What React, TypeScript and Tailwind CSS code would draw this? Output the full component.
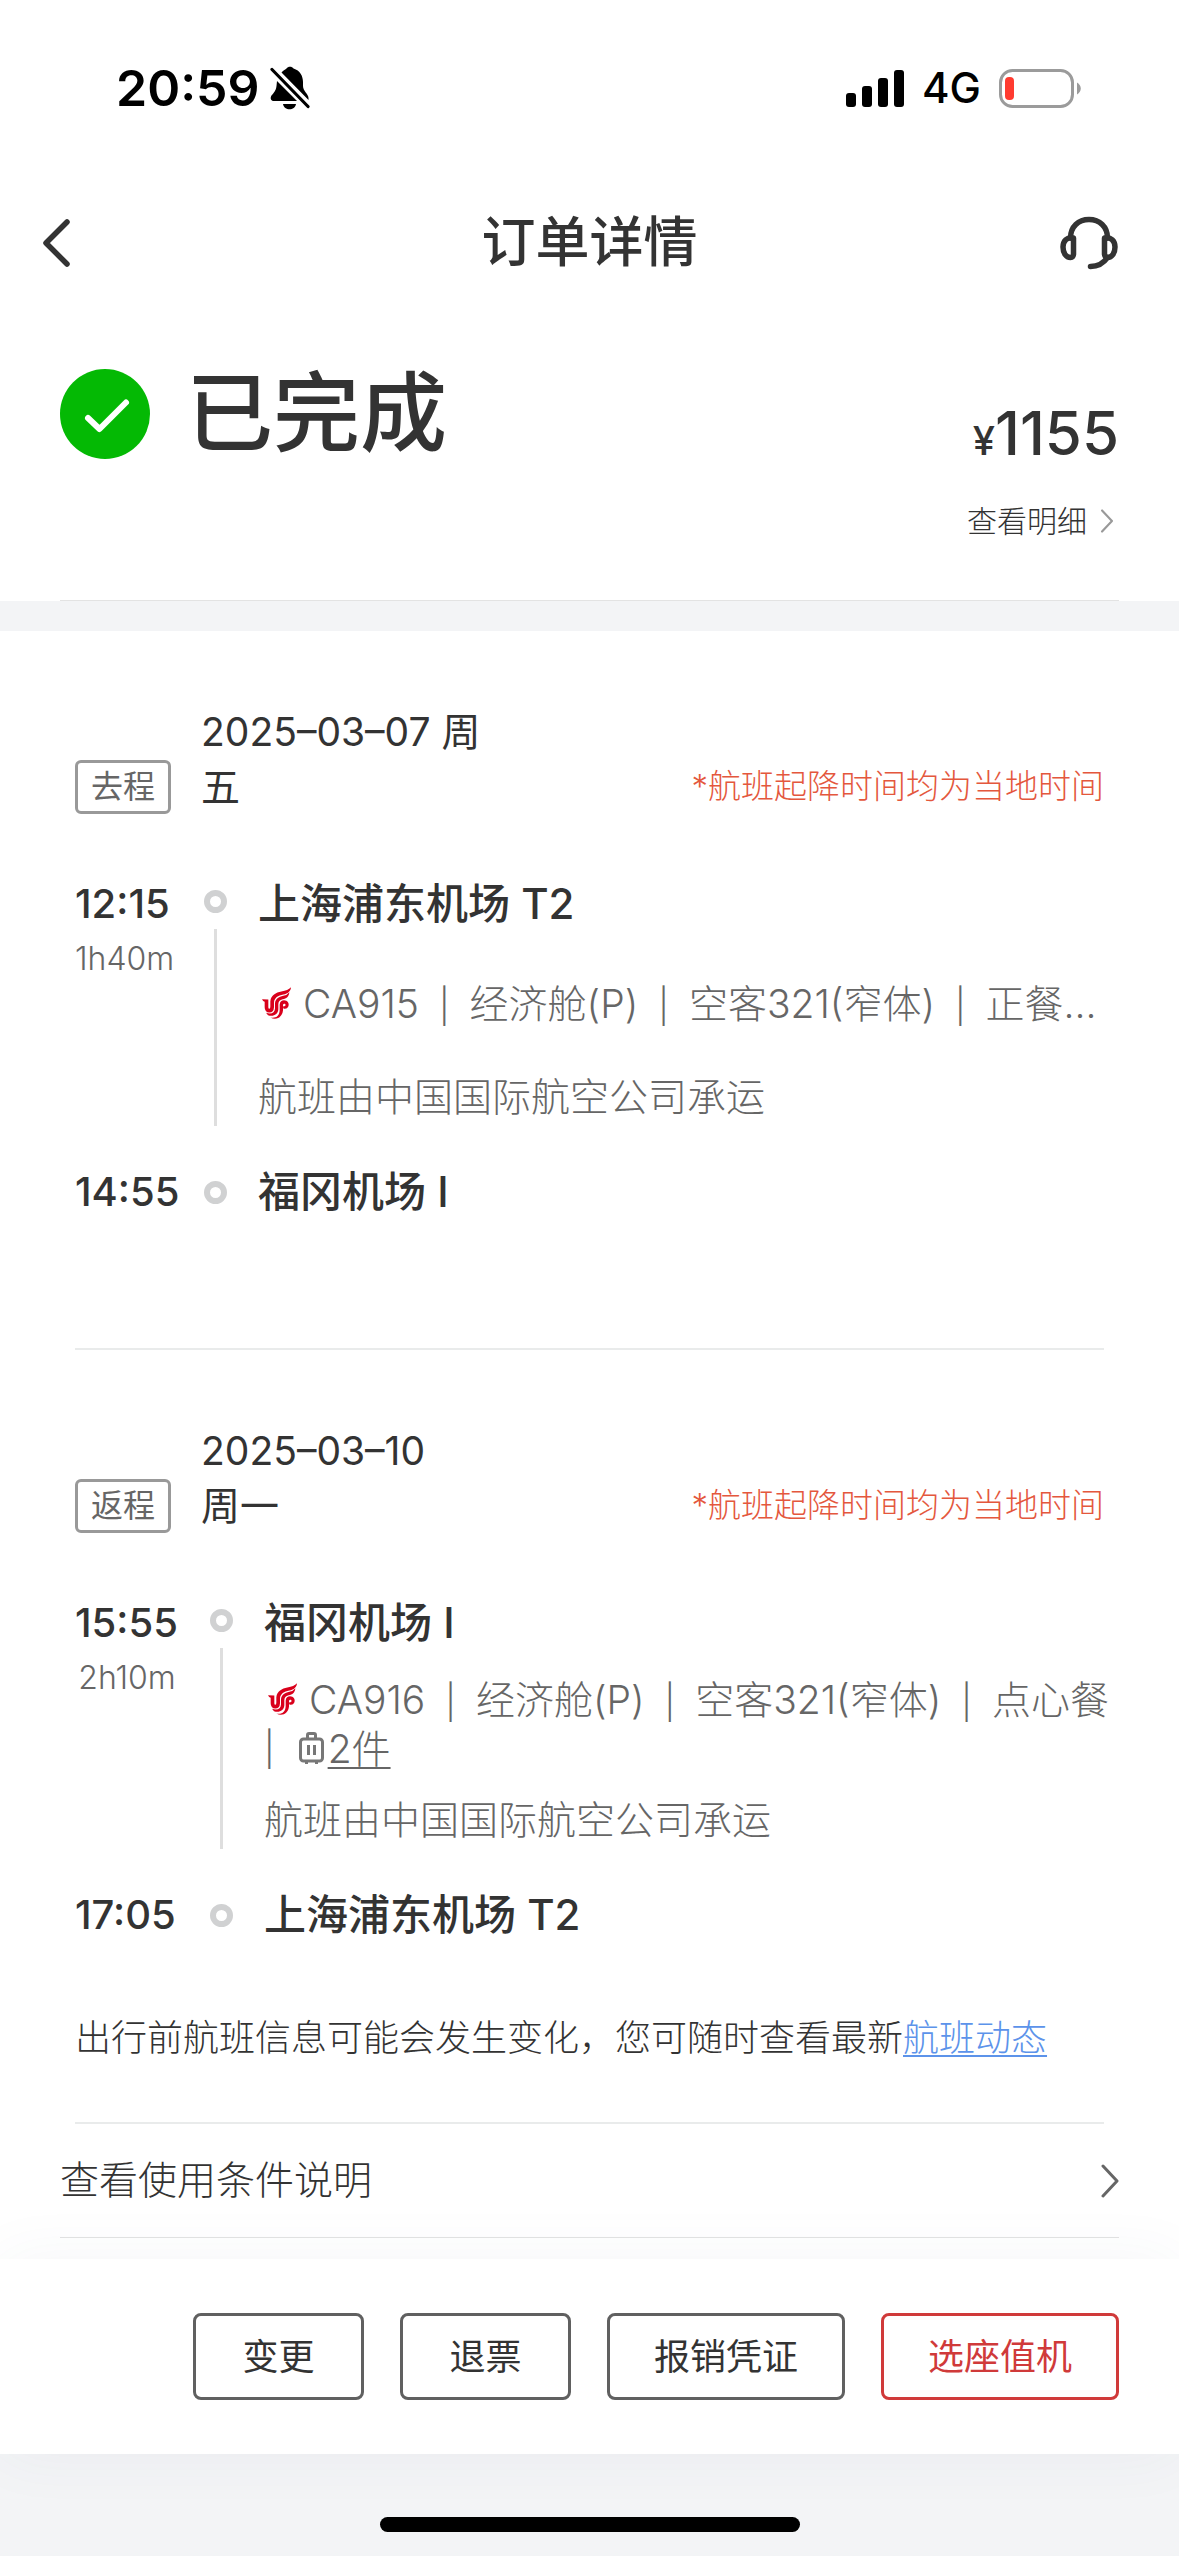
import { type ReactNode } from "react"
import clsx from "clsx"

interface IJourney {
  tag: string
  date: [string, string]
  departTime: string
  departAirport: string
  duration: string
  flight: string[]
  baggage?: string
  carrier: string
  arriveTime: string
  arriveAirport: string
  timeWidth: string
}

const journeys: IJourney[] = [
  {
    tag: "去程",
    date: ["2025–03–07 周", "五"],
    departTime: "12:15",
    departAirport: "上海浦东机场 T2",
    duration: "1h40m",
    flight: ["CA915", "经济舱(P)", "空客321(窄体)", "正餐…"],
    carrier: "航班由中国国际航空公司承运",
    arriveTime: "14:55",
    arriveAirport: "福冈机场 I",
    timeWidth: "w-[98px]",
  },
  {
    tag: "返程",
    date: ["2025–03–10", "周一"],
    departTime: "15:55",
    departAirport: "福冈机场 I",
    duration: "2h10m",
    flight: ["CA916", "经济舱(P)", "空客321(窄体)", "点心餐"],
    baggage: "2件",
    carrier: "航班由中国国际航空公司承运",
    arriveTime: "17:05",
    arriveAirport: "上海浦东机场 T2",
    timeWidth: "w-[104px]",
  },
]

const BellOffIcon = () => (
  <svg className="h-[44px] w-[40px]" viewBox="0 0 40 44" aria-hidden="true">
    <path
      d="M11.500 6.500C13.500 4.200 15.500 3.400 16.500 2.500C18 0 22 0 23.500 2.500C30 4.500 33 10 33 16V20C33 25 38.500 28 38.500 32V34Z"
      fill="#000"
    />
    <path
      d="M7 15L27 35H4C1.500 35 0 33 1 30.500C2 28 6 26 6.500 20Z"
      fill="#000"
    />
    <path d="M13 38H26C25 45 14 45 13 38Z" fill="#000" />
    <path
      d="M2 3.500L38 40.500"
      stroke="#000"
      strokeWidth="3.200"
      strokeLinecap="round"
    />
  </svg>
)

const SignalIcon = () => (
  <svg className="h-[37px] w-[58px]" viewBox="0 0 58 37" aria-hidden="true">
    <rect x="0" y="23" width="10" height="14" rx="3" />
    <rect x="16" y="16" width="10" height="21" rx="3" />
    <rect x="32" y="8" width="10" height="29" rx="3" />
    <rect x="48" y="0" width="10" height="37" rx="3" />
  </svg>
)

const BatteryIcon = () => (
  <svg className="h-[39px] w-[82px]" viewBox="0 0 82 39" aria-hidden="true">
    <rect
      x="1.500"
      y="1.500"
      width="72"
      height="36"
      rx="12"
      fill="none"
      stroke="#9b9b9b"
      strokeWidth="3"
    />
    <rect x="6" y="8" width="9" height="23" rx="4" fill="#ff3b30" />
    <path d="M78 13.500C83 16.500 83 22.500 78 25.500Z" fill="#9b9b9b" />
  </svg>
)

const BackIcon = () => (
  <svg className="h-[50px] w-[28px]" viewBox="0 0 28 50" aria-hidden="true">
    <path
      d="M25 4L4 25L25 46"
      fill="none"
      stroke="#333"
      strokeWidth="5.500"
      strokeLinecap="round"
      strokeLinejoin="round"
    />
  </svg>
)

const HeadsetIcon = () => (
  <svg className="h-[54px] w-[60px]" viewBox="0 0 60 54" aria-hidden="true">
    <g
      fill="none"
      stroke="#333"
      strokeWidth="5.500"
      strokeLinecap="round"
      strokeLinejoin="round"
    >
      <path d="M11.500 22C11.500 10.500 19.500 3.500 30 3.500S48.500 10.500 48.500 22" />
      <path d="M14.500 22C8 20.500 4 25 4 31C4 37 7 41.500 11.500 41.500C13.500 41.500 14.500 40 14.500 38Z" />
      <path d="M45.500 22C52 20.500 56 25 56 31C56 37 53 41.500 48.500 41.500C46.500 41.500 45.500 40 45.500 38Z" />
      <path d="M48.500 41.500C44 48 39 50.500 31.500 50.500" />
    </g>
  </svg>
)

const CheckBadge = () => (
  <svg className="size-[90px]" viewBox="0 0 90 90" aria-hidden="true">
    <circle cx="45" cy="45" r="45" fill="#04b904" />
    <path
      d="M28 49L39.500 60L66 33.500"
      fill="none"
      stroke="#fff"
      strokeWidth="6"
      strokeLinecap="round"
      strokeLinejoin="round"
    />
  </svg>
)

const ChevronIcon = ({ className }: { className: string }) => (
  <svg className={className} viewBox="0 0 18 34" aria-hidden="true">
    <path
      d="M2 2L16 17L2 32"
      fill="none"
      stroke="currentColor"
      strokeWidth="3"
      strokeLinecap="round"
      strokeLinejoin="round"
    />
  </svg>
)

const AirlineLogo = () => (
  <svg
    className="h-[33px] w-[29px] shrink-0"
    viewBox="0 0 87 98"
    aria-label="Air China"
  >
    <g fill="#d9001b">
      <path d="M0 36L19 37V60Q19 65 22 65Q25 65 25 58V42C27 24 42 16 58 13C72 10 80 7 87 0C86 12 78 19 64 22C48 25 37 32 36 46V60Q35 76 22 76Q8 75 8 60V44Q3 43 0 36Z" />
      <path d="M82 15C81 28 73 34 62 36C53 38 49 43 49 51V66C48 82 34 89 18 84L12 77C28 83 38 77 39 64V49C40 35 50 29 64 26Q76 23 82 15Z" />
      <path d="M53 52C54 41 64 37 73 41C84 47 82 65 68 65C64 65 62 61 64 57C71 58 73 52 68 50C64 49 63 52 63 56V70C61 90 43 101 25 91C43 94 52 86 53 69Z" />
    </g>
  </svg>
)

const LuggageIcon = () => (
  <svg className="h-[33px] w-[25px]" viewBox="0 0 25 33" aria-hidden="true">
    <g fill="none" stroke="#777" strokeWidth="3" strokeLinejoin="round">
      <rect x="1.500" y="7" width="22" height="22" rx="3" />
      <path d="M8.500 7V3Q8.500 1.500 10 1.500H15Q16.500 1.500 16.500 3V7" />
      <path d="M9.500 13V23M15.500 13V23M7.500 29V32M17.500 29V32" />
    </g>
  </svg>
)

const StatusBar = () => (
  <div className="flex h-[176px] items-center justify-between pr-[98px] pl-[116px] text-black">
    <div className="flex items-center gap-2.5">
      <span className="text-[50px] leading-none font-semibold">20:59</span>
      <BellOffIcon />
    </div>
    <div className="flex items-center gap-[18px]">
      <SignalIcon />
      <span className="text-[42px] leading-none font-medium">4G</span>
      <BatteryIcon />
    </div>
  </div>
)

const Header = () => (
  <header className="grid h-[134px] grid-cols-[1fr_auto_1fr] items-center px-[42px]">
    <button aria-label="返回" className="justify-self-start">
      <BackIcon />
    </button>
    <h1 className="text-[54px] leading-none font-medium">订单详情</h1>
    <button aria-label="客服" className="justify-self-end pr-[18px]">
      <HeadsetIcon />
    </button>
  </header>
)

const Summary = () => (
  <section className="px-[60px] pt-[59px]">
    <div className="flex items-start justify-between border-b border-[#e3e3e3] pb-[59px]">
      <div className="flex items-center gap-9">
        <CheckBadge />
        <h2 className="text-[87px] leading-[90px] font-medium">已完成</h2>
      </div>
      <div className="flex flex-col items-end pt-8">
        <p className="text-[60px] leading-[64px] font-medium">
          <span className="text-[40px] leading-none">¥</span>1155
        </p>
        <a
          href="#price"
          className="mt-9 flex items-center gap-3 pr-1 text-[30px] leading-10 font-light"
        >
          查看明细
          <ChevronIcon className="h-[24px] w-[16px] text-[#999]" />
        </a>
      </div>
    </div>
  </section>
)

const Dot = () => (
  <span className="block size-[23px] rounded-full border-6 border-[#d0d1d2]" />
)

const FlightInfo = ({ journey }: { journey: IJourney }) => (
  <div className="py-[22px] text-[39px] leading-[49px] font-light text-[#666]">
    <div className="flex min-h-[94px] flex-col justify-center whitespace-nowrap">
      <div className="flex items-center gap-3 pl-1">
        <AirlineLogo />
        <p>
          {journey.flight.map((item, i) => (
            <span key={item}>
              {i > 0 && (
                <span className="mx-5 text-[34px] leading-none">|</span>
              )}
              {item}
            </span>
          ))}
        </p>
      </div>
      {journey.baggage && (
        <div className="flex items-center">
          <span className="mr-6 text-[34px]">|</span>
          <LuggageIcon />
          <a
            href="#baggage"
            className="ml-1 underline decoration-2 underline-offset-4"
          >
            {journey.baggage}
          </a>
        </div>
      )}
    </div>
  </div>
)

const Journey = ({
  journey,
  children,
}: {
  journey: IJourney
  children?: ReactNode
}) => (
  <section className="mx-[75px] border-b-2 border-[#e9ebeb] pt-[73px]">
    <div className="flex items-end">
      <span className="flex h-[54px] w-24 items-center justify-center rounded-md border-3 border-[#999] text-[32px] leading-none text-[#666]">
        {journey.tag}
      </span>
      <p className="ml-[30px] text-[39px] leading-[55px]">
        {journey.date[0]}
        <br />
        {journey.date[1]}
      </p>
      <p className="ml-auto text-[33px] leading-[55px] font-light text-[#e4573d]">
        *航班起降时间均为当地时间
      </p>
    </div>

    <div className="mt-[60px] flex">
      <div className={clsx("shrink-0 whitespace-nowrap", journey.timeWidth)}>
        <p className="text-[40px] leading-[60px] font-medium">
          {journey.departTime}
        </p>
        <p className="text-center text-[32px] leading-[50px] font-light text-[#666]">
          {journey.duration}
        </p>
      </div>
      <div className="mx-[31px] flex w-[23px] shrink-0 flex-col items-center gap-4 pt-4 pb-9">
        <Dot />
        <span className="w-[3px] flex-1 bg-[#dedede]" />
      </div>
      <div className="min-w-0 flex-1 pb-10">
        <h3 className="text-[42px] leading-[60px] font-medium">
          {journey.departAirport}
        </h3>
        <FlightInfo journey={journey} />
        <p className="text-[39px] leading-[50px] font-light text-[#666]">
          {journey.carrier}
        </p>
      </div>
    </div>

    <div className="flex items-center leading-[60px] font-medium">
      <p
        className={clsx(
          "shrink-0 text-[40px] whitespace-nowrap",
          journey.timeWidth
        )}
      >
        {journey.arriveTime}
      </p>
      <span className="mx-[31px]">
        <Dot />
      </span>
      <h3 className="text-[42px]">{journey.arriveAirport}</h3>
    </div>
    {children}
  </section>
)

const ActionButton = ({
  children,
  primary,
}: {
  children: ReactNode
  primary?: boolean
}) => (
  <button
    className={clsx(
      "h-[87px] min-w-[171px] rounded-lg border-3 px-[44px] text-[36px] leading-none",
      primary ? "border-[#d03a3a] text-[#d03a3a]" : "border-[#606060]"
    )}
  >
    {children}
  </button>
)

const App = () => (
  <div className="flex min-h-screen flex-col bg-white font-['Inter','Noto_Sans_CJK_SC',sans-serif] text-[#333]">
    <StatusBar />
    <Header />
    <main>
      <Summary />
      <div className="h-[30px] bg-[#f3f4f6]" />
      <Journey journey={journeys[0]}>
        <div className="h-[126px]" />
      </Journey>
      <Journey journey={journeys[1]}>
        <p className="pt-[66px] pb-[57px] text-[36px] leading-[54px] font-light">
          出行前航班信息可能会发生变化，您可随时查看最新
          <a
            href="#status"
            className="text-[#5c93ea] underline decoration-2 underline-offset-4"
          >
            航班动态
          </a>
        </p>
      </Journey>
      <a
        href="#terms"
        className="mx-[60px] mb-[21px] flex h-[114px] items-center justify-between border-b border-[#e3e3e3] text-[39px] font-light"
      >
        查看使用条件说明
        <ChevronIcon className="h-[34px] w-[18px] text-[#666]" />
      </a>
    </main>
    <div className="flex-1 bg-[#f3f4f6]">
      <footer className="flex justify-end gap-9 bg-white px-[60px] py-[54px] shadow-[0_0_60px_rgba(60,70,110,0.05)]">
        <ActionButton>变更</ActionButton>
        <ActionButton>退票</ActionButton>
        <ActionButton>报销凭证</ActionButton>
        <ActionButton primary>选座值机</ActionButton>
      </footer>
      <div className="mx-auto mt-[63px] mb-6 h-[15px] w-[420px] rounded-full bg-black" />
    </div>
  </div>
)

export default App
